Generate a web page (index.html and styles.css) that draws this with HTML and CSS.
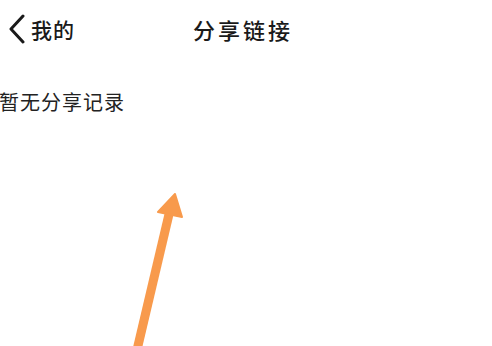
FILE: index.html
```html
<!DOCTYPE html>
<html lang="zh-CN">
<head>
<meta charset="utf-8">
<link rel="stylesheet" href="styles.css">
</head>
<body>
<div class="page">
  <header class="topbar">
    <div class="back">
      <svg class="chev" width="16" height="30" viewBox="0 0 16 30"><path d="M14 2 L2 15 L14 28" fill="none" stroke="#1a1a1a" stroke-width="3" stroke-linecap="round" stroke-linejoin="round"/></svg>
      <span class="back-text">我的</span>
    </div>
    <h1 class="title">分享链接</h1>
  </header>
  <p class="empty">暂无分享记录</p>
  <svg class="arrow" width="492" height="346" viewBox="0 0 492 346">
    <line x1="137" y1="350" x2="170" y2="210" stroke="#F89A4C" stroke-width="9"/>
    <polygon points="175,194 158,212 182,217" fill="#F89A4C" stroke="#F89A4C" stroke-width="2" stroke-linejoin="round"/>
  </svg>
</div>
</body>
</html>
```

FILE: styles.css
```css
html, body {
  margin: 0;
  padding: 0;
  background: #fff;
}
.page {
  position: relative;
  width: 492px;
  height: 346px;
  overflow: hidden;
  font-family: "Noto Sans CJK SC", "Noto Sans", sans-serif;
  color: #1a1a1a;
}
.topbar {
  display: flex;
  align-items: center;
  height: 58px;
}
.back {
  display: flex;
  align-items: center;
  padding-left: 9px;
  width: 180px;
  box-sizing: border-box;
}
.chev {
  display: block;
  margin-right: 6px;
}
.back-text {
  font-size: 21px;
  font-weight: 500;
  letter-spacing: 1px;
  line-height: 1;
}
.title {
  margin: 0 0 0 13px;
  font-size: 22px;
  font-weight: 500;
  letter-spacing: 3px;
  line-height: 1;
}
.empty {
  margin: 31px 0 0 -1px;
  font-size: 20px;
  letter-spacing: 1px;
  line-height: 1.3;
  color: #222;
}
.arrow {
  position: absolute;
  left: 0;
  top: 0;
}
```
